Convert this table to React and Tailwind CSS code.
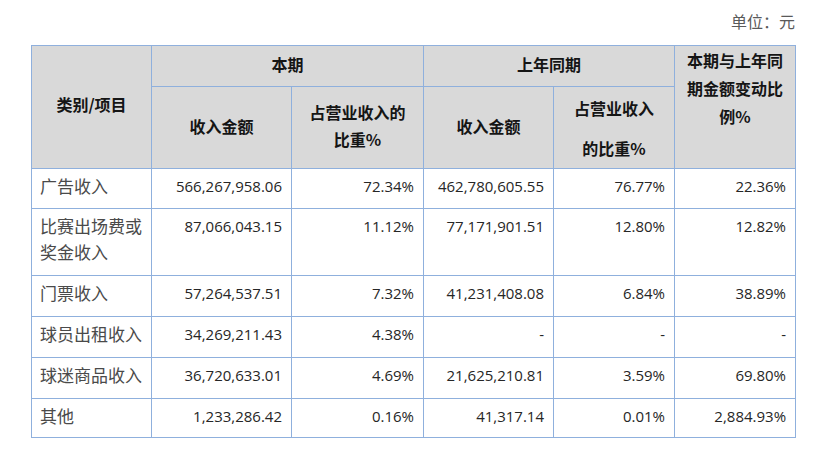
import React from 'react';

const rows = [
  { name: ['广告收入'], amt: '566,267,958.06', pct: '72.34%', lastAmt: '462,780,605.55', lastPct: '76.77%', chg: '22.36%', h: 'h-[40px]' },
  { name: ['比赛出场费或', '奖金收入'], amt: '87,066,043.15', pct: '11.12%', lastAmt: '77,171,901.51', lastPct: '12.80%', chg: '12.82%', h: 'h-[67px]' },
  { name: ['门票收入'], amt: '57,264,537.51', pct: '7.32%', lastAmt: '41,231,408.08', lastPct: '6.84%', chg: '38.89%', h: 'h-[41px]' },
  { name: ['球员出租收入'], amt: '34,269,211.43', pct: '4.38%', lastAmt: '-', lastPct: '-', chg: '-', h: 'h-[41px]' },
  { name: ['球迷商品收入'], amt: '36,720,633.01', pct: '4.69%', lastAmt: '21,625,210.81', lastPct: '3.59%', chg: '69.80%', h: 'h-[41px]' },
  { name: ['其他'], amt: '1,233,286.42', pct: '0.16%', lastAmt: '41,317.14', lastPct: '0.01%', chg: '2,884.93%', h: 'h-[39px]' },
];

const th = "border border-[#8fb0dd] bg-[#d9d9d9] text-center font-bold text-[16px] text-[#151515] font-['Noto_Sans_CJK_SC',sans-serif]";
const num = "border border-[#8fb0dd] align-top text-right pr-[9px] pt-[4px] leading-[26px] text-[15px] font-medium text-[#262626] font-['Open_Sans','Liberation_Sans',sans-serif]";

export default function App() {
  return (
    <div className="min-h-screen bg-white pl-[31px] pt-[9px]">
      <div className="w-[764px]">
        {/* 单位 */}
        <div className="h-[24px] text-right leading-[24px] text-[16px] text-[#5a5a5a] font-['Noto_Sans_CJK_SC',serif] mb-[12px]">
          单位：元
        </div>

        <table className="w-[764px] table-fixed border-collapse">
          <colgroup>
            <col className="w-[120px]" />
            <col className="w-[140px]" />
            <col className="w-[132px]" />
            <col className="w-[130px]" />
            <col className="w-[121px]" />
            <col className="w-[121px]" />
          </colgroup>
          <thead>
            <tr className="h-[41px]">
              <th rowSpan={2} className={`${th} pb-[6px]`}>类别/项目</th>
              <th colSpan={2} className={`${th} leading-[24px] pb-[4px]`}>本期</th>
              <th colSpan={2} className={`${th} leading-[24px] pb-[4px]`}>上年同期</th>
              <th rowSpan={2} className={`${th} align-top leading-[28px] pt-0`}>
                本期与上年同<br />期金额变动比<br />例%
              </th>
            </tr>
            <tr className="h-[78px]">
              <th className={`${th} leading-[26px] pb-[4px]`}>收入金额</th>
              <th className={`${th} leading-[27px] pb-[4px]`}>占营业收入的<br />比重%</th>
              <th className={`${th} leading-[26px] pb-[4px]`}>收入金额</th>
              <th className={`${th} leading-[40px] pt-[1px]`}>占营业收入<br />的比重%</th>
            </tr>
          </thead>
          <tbody>
            {rows.map((r, i) => (
              <tr key={i} className={r.h}>
                <td className="border border-[#8fb0dd] align-top pl-[8px] pt-[4px] leading-[26px] text-[17px] text-[#4a4a4a] font-['Noto_Sans_CJK_SC',serif]">
                  {r.name.map((n, j) => (
                    <div key={j}>{n}</div>
                  ))}
                </td>
                <td className={num}>{r.amt}</td>
                <td className={num}>{r.pct}</td>
                <td className={num}>{r.lastAmt}</td>
                <td className={num}>{r.lastPct}</td>
                <td className={num}>{r.chg}</td>
              </tr>
            ))}
          </tbody>
        </table>
      </div>
    </div>
  );
}
